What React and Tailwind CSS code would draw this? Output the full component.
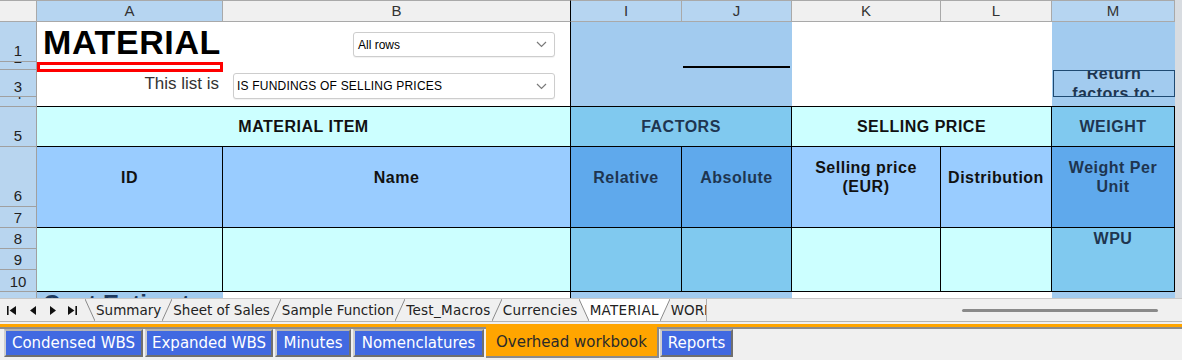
import React from "react";

function Chevron() {
  return (
    <svg width="11" height="7" viewBox="0 0 11 7" className="shrink-0">
      <polyline points="1,1 5.5,5.5 10,1" fill="none" stroke="#7a7a7a" strokeWidth="1.2" />
    </svg>
  );
}

function SepFwd({ fillLeft = false }) {
  return (
    <svg width="10" height="22" viewBox="0 0 10 22" className="shrink-0 self-end">
      {fillLeft && <polygon points="0,0 10,0 0,22" fill="#ffffff" />}
      <line x1="0" y1="22" x2="10" y2="0" stroke="#8a8a8a" strokeWidth="1" />
    </svg>
  );
}

function SepBack({ fillRight = false }) {
  return (
    <svg width="10" height="22" viewBox="0 0 10 22" className="shrink-0 self-end">
      {fillRight && <polygon points="0,0 10,0 10,22" fill="#ffffff" />}
      <line x1="0" y1="0" x2="10" y2="22" stroke="#8a8a8a" strokeWidth="1" />
    </svg>
  );
}

export default function App() {
  return (
    <div className="w-[1182px] h-[360px] overflow-hidden bg-[#f0f0f0] font-['Liberation_Sans',Arial,sans-serif]">
      <div className="grid grid-cols-[37px_186px_348px_111px_110px_149px_111px_123px_7px] grid-rows-[22px_40px_8px_27px_10px_40px_60px_21px_21px_21px_22px_6px] bg-white">
        {/* column headers */}
        <div className="col-start-1 row-start-1 bg-[#f0f0f0] border-t border-r border-b border-[#a9a9a9]" />
        <div className="col-start-2 row-start-1 bg-[#b6d5f1] border-t border-r border-b border-[#a9a9a9] flex items-center justify-center text-[15px] leading-[18px] text-[#333]">A</div>
        <div className="col-start-3 row-start-1 bg-[#f0f0f0] border-t border-b border-[#a9a9a9] border-r border-r-black flex items-center justify-center text-[15px] leading-[18px] text-[#333]">B</div>
        <div className="col-start-4 row-start-1 bg-[#b6d5f1] border-t border-r border-b border-[#a9a9a9] flex items-center justify-center text-[15px] leading-[18px] text-[#333]">I</div>
        <div className="col-start-5 row-start-1 bg-[#b6d5f1] border-t border-r border-b border-[#a9a9a9] flex items-center justify-center text-[15px] leading-[18px] text-[#333]">J</div>
        <div className="col-start-6 row-start-1 bg-[#f0f0f0] border-t border-r border-b border-[#a9a9a9] flex items-center justify-center text-[15px] leading-[18px] text-[#333]">K</div>
        <div className="col-start-7 row-start-1 bg-[#f0f0f0] border-t border-r border-b border-[#a9a9a9] flex items-center justify-center text-[15px] leading-[18px] text-[#333]">L</div>
        <div className="col-start-8 row-start-1 bg-[#b6d5f1] border-t border-r border-b border-[#a9a9a9] flex items-center justify-center text-[15px] leading-[18px] text-[#333]">M</div>
        <div className="col-start-9 row-start-1 row-span-12 bg-[#d8dce1]" />

        {/* row headers */}
        <div className="col-start-1 row-start-2 bg-[#b8d5ef] border-r border-b border-[#a0a0a0] flex items-end justify-center pb-[2px] overflow-hidden text-[15px] leading-[17px] text-[#222]">1</div>
        <div className="col-start-1 row-start-3 bg-[#b8d5ef] border-r border-b border-[#a0a0a0] flex items-start justify-center overflow-hidden text-[15px] leading-[17px] text-[#222]"><span className="-mt-[13px]">2</span></div>
        <div className="col-start-1 row-start-4 bg-[#b8d5ef] border-r border-b border-[#a0a0a0] flex items-end justify-center pb-[1px] overflow-hidden text-[15px] leading-[17px] text-[#222]">3</div>
        <div className="col-start-1 row-start-5 bg-[#b8d5ef] border-r border-b border-[#a0a0a0] flex items-start justify-center overflow-hidden text-[15px] leading-[17px] text-[#222]"><span className="-mt-[12px]">4</span></div>
        <div className="col-start-1 row-start-6 bg-[#b8d5ef] border-r border-b border-[#a0a0a0] flex items-end justify-center pb-[2px] overflow-hidden text-[15px] leading-[17px] text-[#222]">5</div>
        <div className="col-start-1 row-start-7 bg-[#b8d5ef] border-r border-b border-[#a0a0a0] flex items-end justify-center pb-[2px] overflow-hidden text-[15px] leading-[17px] text-[#222]">6</div>
        <div className="col-start-1 row-start-8 bg-[#b8d5ef] border-r border-b border-[#a0a0a0] flex items-end justify-center pb-[1px] overflow-hidden text-[15px] leading-[17px] text-[#222]">7</div>
        <div className="col-start-1 row-start-9 bg-[#b8d5ef] border-r border-b border-[#a0a0a0] flex items-end justify-center pb-[1px] overflow-hidden text-[15px] leading-[17px] text-[#222]">8</div>
        <div className="col-start-1 row-start-10 bg-[#b8d5ef] border-r border-b border-[#a0a0a0] flex items-end justify-center pb-[1px] overflow-hidden text-[15px] leading-[17px] text-[#222]">9</div>
        <div className="col-start-1 row-start-11 bg-[#b8d5ef] border-r border-b border-[#a0a0a0] flex items-end justify-center pb-[1px] overflow-hidden text-[15px] leading-[17px] text-[#222]">10</div>
        <div className="col-start-1 row-start-12 bg-[#b8d5ef] border-r border-[#a0a0a0]" />

        {/* A rows 1-4 */}
        <div className="col-start-2 row-start-2 row-span-4 bg-white border-b border-black flex flex-col">
          <div className="h-[40px] pl-[6px] text-[34px] leading-[40px] tracking-[0.6px] font-bold text-black whitespace-nowrap">MATERIAL</div>
          <div className="h-[10px] w-[186px] border-[3px] border-[#ff0000] bg-white" />
          <div className="h-[23px] pr-[4px] text-right text-[17px] leading-[23px] text-[#333] whitespace-nowrap">This list is</div>
        </div>

        {/* B rows 1-4 */}
        <div className="col-start-3 row-start-2 row-span-4 bg-white border-r border-b border-black flex flex-col pt-[10px]">
          <div className="ml-[130px] w-[202px] h-[25px] flex items-center justify-between border border-[#cdcdcd] rounded-[3px] bg-white pl-[4px] pr-[7px] text-[12px] text-black shadow-[0_1px_1px_rgba(0,0,0,0.06)]">
            <span>All rows</span>
            <Chevron />
          </div>
          <div className="mt-[16px] ml-[10px] w-[322px] h-[26px] flex items-center justify-between border border-[#cdcdcd] rounded-[3px] bg-white pl-[3px] pr-[7px] text-[12px] tracking-[0.2px] text-black shadow-[0_1px_1px_rgba(0,0,0,0.06)]">
            <span className="whitespace-nowrap">IS FUNDINGS OF SELLING PRICES</span>
            <Chevron />
          </div>
        </div>

        {/* I-J rows 1-4 */}
        <div className="col-start-4 col-span-2 row-start-2 row-span-4 bg-[#a2cbef] border-b border-black pt-[44px]">
          <div className="ml-[112px] w-[107px] h-[2px] bg-black" />
        </div>

        {/* K-L rows 1-4 */}
        <div className="col-start-6 col-span-2 row-start-2 row-span-4 bg-white border-b border-black" />

        {/* M rows 1-4 */}
        <div className="col-start-8 row-start-2 row-span-4 bg-[#a2cbef] border-b border-black pt-[48px]">
          <div className="ml-px w-[122px] h-[27px] border border-[#1f4a72] overflow-hidden flex items-center justify-center">
            <div className="text-center text-[16px] leading-[20px] tracking-[0.5px] font-bold text-[#1e3550] whitespace-nowrap">
              Return<br />factors to:
            </div>
          </div>
        </div>

        {/* Row 5 */}
        <div className="col-start-2 col-span-2 row-start-6 bg-[#ccffff] border-r border-b border-black flex items-center justify-center text-[16px] tracking-[0.5px] font-bold text-[#111]">MATERIAL ITEM</div>
        <div className="col-start-4 col-span-2 row-start-6 bg-[#80c9ef] border-r border-b border-black flex items-center justify-center text-[16px] tracking-[0.5px] font-bold text-[#1e3550]">FACTORS</div>
        <div className="col-start-6 col-span-2 row-start-6 bg-[#ccffff] border-r border-b border-black flex items-center justify-center text-[16px] tracking-[0.5px] font-bold text-[#111]">SELLING PRICE</div>
        <div className="col-start-8 row-start-6 bg-[#80c9ef] border-r border-b border-black flex items-center justify-center text-[16px] tracking-[0.5px] font-bold text-[#1e3550]">WEIGHT</div>

        {/* Rows 6-7 */}
        <div className="col-start-2 row-start-7 row-span-2 bg-[#99ccff] border-r border-b border-black">
          <div className="h-[60px] flex items-center justify-center text-center text-[16px] leading-[19px] tracking-[0.5px] font-bold text-[#111]">ID</div>
        </div>
        <div className="col-start-3 row-start-7 row-span-2 bg-[#99ccff] border-r border-b border-black">
          <div className="h-[60px] flex items-center justify-center text-center text-[16px] leading-[19px] tracking-[0.5px] font-bold text-[#111]">Name</div>
        </div>
        <div className="col-start-4 row-start-7 row-span-2 bg-[#5fa9ec] border-r border-b border-black">
          <div className="h-[60px] flex items-center justify-center text-center text-[16px] leading-[19px] tracking-[0.5px] font-bold text-[#1e3550]">Relative</div>
        </div>
        <div className="col-start-5 row-start-7 row-span-2 bg-[#5fa9ec] border-r border-b border-black">
          <div className="h-[60px] flex items-center justify-center text-center text-[16px] leading-[19px] tracking-[0.5px] font-bold text-[#1e3550]">Absolute</div>
        </div>
        <div className="col-start-6 row-start-7 row-span-2 bg-[#99ccff] border-r border-b border-black">
          <div className="h-[60px] flex items-center justify-center text-center text-[16px] leading-[19px] tracking-[0.5px] font-bold text-[#111]">Selling price<br />(EUR)</div>
        </div>
        <div className="col-start-7 row-start-7 row-span-2 bg-[#99ccff] border-r border-b border-black">
          <div className="h-[60px] flex items-center justify-center text-center text-[16px] leading-[19px] tracking-[0.5px] font-bold text-[#111]">Distribution</div>
        </div>
        <div className="col-start-8 row-start-7 row-span-2 bg-[#5fa9ec] border-r border-b border-black">
          <div className="h-[60px] flex items-center justify-center text-center text-[16px] leading-[19px] tracking-[0.5px] font-bold text-[#1e3550]">Weight Per<br />Unit</div>
        </div>

        {/* Rows 8-10 */}
        <div className="col-start-2 row-start-9 row-span-3 bg-[#ccffff] border-r border-b border-black" />
        <div className="col-start-3 row-start-9 row-span-3 bg-[#ccffff] border-r border-b border-black" />
        <div className="col-start-4 row-start-9 row-span-3 bg-[#80c9ef] border-r border-b border-black" />
        <div className="col-start-5 row-start-9 row-span-3 bg-[#80c9ef] border-r border-b border-black" />
        <div className="col-start-6 row-start-9 row-span-3 bg-[#ccffff] border-r border-b border-black" />
        <div className="col-start-7 row-start-9 row-span-3 bg-[#ccffff] border-r border-b border-black" />
        <div className="col-start-8 row-start-9 row-span-3 bg-[#80c9ef] border-r border-b border-black flex justify-center pt-[1px] text-[16px] leading-[19px] tracking-[0.5px] font-bold text-[#1e3550]">WPU</div>

        {/* Row 11 (partial) */}
        <div className="col-start-2 row-start-12 bg-[#a2cbef] overflow-hidden pl-[6px]">
          <div className="-mt-[2px] text-[24px] leading-[28px] font-bold text-[#1e3a60] whitespace-nowrap">Cost Estimate</div>
        </div>
        <div className="col-start-3 row-start-12 bg-white border-r border-black" />
        <div className="col-start-4 col-span-2 row-start-12 bg-[#a2cbef]" />
        <div className="col-start-6 col-span-2 row-start-12 bg-white" />
        <div className="col-start-8 row-start-12 bg-[#a2cbef]" />
      </div>

      {/* Sheet tab bar */}
      <div className="h-[24px] bg-[#f0f0f0] border-t border-[#c8c8c8] border-b border-b-[#b4b4b4] flex items-stretch font-['DejaVu_Sans',sans-serif] text-[13.5px] text-[#222]">
        <div className="w-[85px] shrink-0 flex items-center">
          <svg width="9" height="9" viewBox="0 0 9 9" className="ml-[7px]">
            <rect x="0" y="0" width="1.6" height="9" fill="#111" />
            <polygon points="9,0 2.6,4.5 9,9" fill="#111" />
          </svg>
          <svg width="6" height="9" viewBox="0 0 6 9" className="ml-[14px]">
            <polygon points="6,0 0,4.5 6,9" fill="#111" />
          </svg>
          <svg width="6" height="9" viewBox="0 0 6 9" className="ml-[14px]">
            <polygon points="0,0 6,4.5 0,9" fill="#111" />
          </svg>
          <svg width="9" height="9" viewBox="0 0 9 9" className="ml-[12px]">
            <polygon points="0,0 6.4,4.5 0,9" fill="#111" />
            <rect x="7.4" y="0" width="1.6" height="9" fill="#111" />
          </svg>
        </div>
        <div className="w-[622px] shrink-0 flex items-stretch overflow-hidden border-r border-[#b0b0b0]">
          <SepBack />
          <div className="px-[1px] flex items-center whitespace-nowrap">Summary</div>
          <SepFwd />
          <div className="px-[1px] flex items-center whitespace-nowrap">Sheet of Sales</div>
          <SepFwd />
          <div className="px-[1px] flex items-center whitespace-nowrap">Sample Function</div>
          <SepFwd />
          <div className="px-[1px] flex items-center whitespace-nowrap tracking-[0.3px]">Test_Macros</div>
          <SepFwd />
          <div className="px-[1px] flex items-center whitespace-nowrap tracking-[0.3px]">Currencies</div>
          <SepBack fillRight />
          <div className="px-[1px] flex items-center whitespace-nowrap bg-white tracking-[0.3px]">MATERIAL</div>
          <SepFwd fillLeft />
          <div className="px-[1px] flex items-center whitespace-nowrap">WORKBOOK</div>
        </div>
        <div className="flex-1 flex items-center">
          <div className="ml-[255px] w-[196px] h-[3px] rounded-full bg-[#8a8a8a]" />
        </div>
      </div>

      {/* Bottom button bar */}
      <div className="h-[2px] bg-[#f0f0f0]" />
      <div className="h-[3px] bg-[#ffa500]" />
      <div className="h-[2px] bg-[#8c8c8c]" />
      <div className="h-[31px] flex items-start gap-[2px] pl-[4px] font-['DejaVu_Sans',sans-serif] text-[15px]">
        <div className="w-[139px] h-[28px] flex items-center justify-center bg-[#4169e1] text-white border-2 border-t-[#b4b4b4] border-l-[#cfcfcf] border-r-[#6f6f6f] border-b-[#6f6f6f] whitespace-nowrap">Condensed WBS</div>
        <div className="w-[128px] h-[28px] flex items-center justify-center bg-[#4169e1] text-white border-2 border-t-[#b4b4b4] border-l-[#cfcfcf] border-r-[#6f6f6f] border-b-[#6f6f6f] whitespace-nowrap">Expanded WBS</div>
        <div className="w-[76px] h-[28px] flex items-center justify-center bg-[#4169e1] text-white border-2 border-t-[#b4b4b4] border-l-[#cfcfcf] border-r-[#6f6f6f] border-b-[#6f6f6f] whitespace-nowrap">Minutes</div>
        <div className="w-[131px] h-[28px] flex items-center justify-center bg-[#4169e1] text-white border-2 border-t-[#b4b4b4] border-l-[#cfcfcf] border-r-[#6f6f6f] border-b-[#6f6f6f] whitespace-nowrap">Nomenclatures</div>
        <div className="-mt-[2px] w-[173px] h-[31px] flex items-center justify-center pt-[2px] bg-[#ffa500] text-[#2a2a2a] border-r-2 border-b-2 border-[#8a8a8a] whitespace-nowrap">Overhead workbook</div>
        <div className="-ml-px w-[73px] h-[28px] flex items-center justify-center bg-[#4169e1] text-white border-2 border-t-[#b4b4b4] border-l-[#cfcfcf] border-r-[#6f6f6f] border-b-[#6f6f6f] whitespace-nowrap">Reports</div>
      </div>
    </div>
  );
}
